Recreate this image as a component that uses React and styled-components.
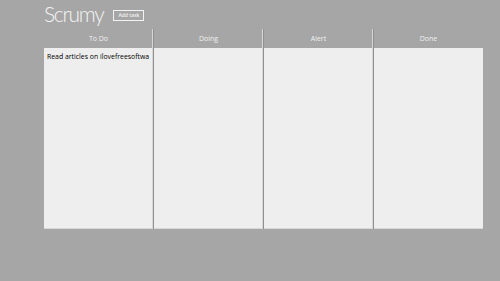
import React from "react";
import styled, { createGlobalStyle } from "styled-components";

const GlobalStyle = createGlobalStyle`
  html, body {
    margin: 0;
    padding: 0;
    background: #a6a6a6;
    font-family: "Open Sans", "Noto Sans", sans-serif;
  }
`;

const Page = styled.div`
  width: 500px;
  height: 281px;
  padding: 0 17px 0 44px;
  box-sizing: border-box;
  overflow: hidden;
`;

const Header = styled.div`
  display: flex;
  align-items: center;
  height: 28px;
  gap: 10px;
`;

const Title = styled.h1`
  margin: 0;
  margin-top: -1px;
  font-family: "Lato", "Noto Sans", sans-serif;
  font-weight: 300;
  font-size: 21px;
  letter-spacing: -1.3px;
  color: #f4f4f4;
`;

const AddButton = styled.button`
  margin-top: 2px;
  height: 11px;
  padding: 0 4px;
  border: 1px solid #f2f2f2;
  background: transparent;
  color: #f2f2f2;
  font-family: "Open Sans", sans-serif;
  font-size: 5px;
  font-weight: 600;
  line-height: 9px;
  cursor: pointer;
`;

const Board = styled.div`
  display: grid;
  grid-template-columns: 109px 110px 110px 110px;
  width: 439px;
`;

const Column = styled.div`
  display: flex;
  flex-direction: column;
  border-left: ${(p) => (p.first ? "none" : "1px solid #8f8f8f")};
  box-shadow: ${(p) => (p.first ? "none" : "-1px 0 0 #d8d8d8")};
  margin-top: 1px;
`;

const ColumnTitle = styled.div`
  height: 19px;
  display: flex;
  align-items: center;
  justify-content: center;
  font-family: "Open Sans", sans-serif;
  font-size: 7px;
  color: #f0f0f0;
`;

const ColumnBody = styled.div`
  height: 181px;
  background: #eeeeee;
  border-bottom: 1px solid #d6d6d6;
  padding: 4px 0 0 3px;
  box-sizing: border-box;
  overflow: hidden;
`;

const Card = styled.div`
  font-family: "Open Sans", sans-serif;
  font-size: 6.9px;
  color: #000;
  white-space: nowrap;
`;

const columns = [
  { name: "To Do", cards: ["Read articles on ilovefreesoftwa"] },
  { name: "Doing", cards: [] },
  { name: "Alert", cards: [] },
  { name: "Done", cards: [] },
];

export default function App() {
  return (
    <Page>
      <GlobalStyle />
      <Header>
        <Title>Scrumy</Title>
        <AddButton>Add task</AddButton>
      </Header>
      <Board>
        {columns.map((col, i) => (
          <Column key={col.name} first={i === 0}>
            <ColumnTitle>{col.name}</ColumnTitle>
            <ColumnBody>
              {col.cards.map((c) => (
                <Card key={c}>{c}</Card>
              ))}
            </ColumnBody>
          </Column>
        ))}
      </Board>
    </Page>
  );
}
